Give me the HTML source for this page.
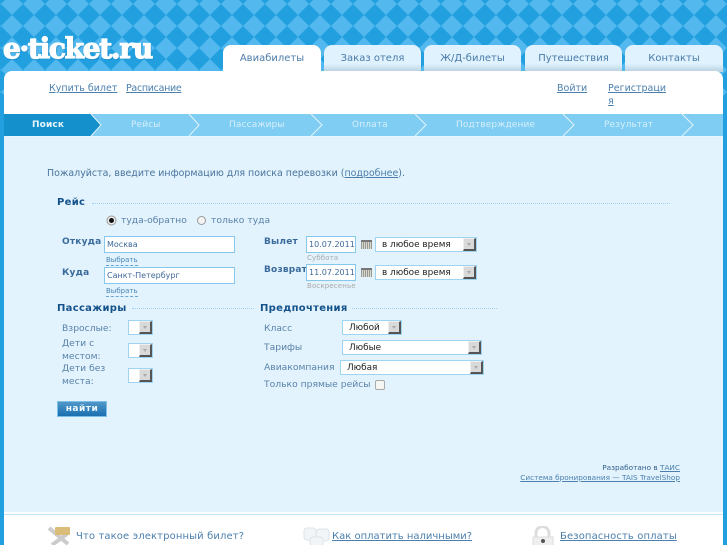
<!DOCTYPE html>
<html><head><meta charset="utf-8">
<style>
html,body{margin:0;padding:0}
body{width:727px;height:545px;overflow:hidden;position:relative;background:#219fdf;font-family:"DejaVu Sans","Liberation Sans",sans-serif;font-size:11px;color:#4b77a3}
.a{position:absolute;white-space:nowrap}
a{color:#4b7fae;text-decoration:underline}
#bg{position:absolute;left:0;top:0}
.logo{left:3px;top:32px;font-family:"DejaVu Serif","Liberation Serif",serif;font-weight:bold;font-size:28px;color:#fff;letter-spacing:-1.3px;-webkit-text-stroke:1.2px #fff;text-shadow:1px 1px 1px #1a7fb8}
.tab{position:absolute;top:45px;height:27px;background:linear-gradient(#dff2fe 0,#dff2fe 70%,#b9d0de 100%);border-radius:8px 8px 0 0;text-align:center;font-size:10px;line-height:27px;color:#4a7ba8}
.tab.on{background:#fff}
#main{position:absolute;left:4px;top:71px;width:719px;height:474px;background:#fff;border-radius:8px 8px 0 0}
#steps{position:absolute;left:4px;top:114px;width:719px;height:22px;background:#7fcdf2;overflow:hidden}
#form{position:absolute;left:4px;top:136px;width:719px;height:375px;background:#e2f3fd;border-top:1px solid #e8f6fe}
#foot{position:absolute;left:4px;top:514px;width:719px;height:31px;background:#fff;border-top:1px solid #bfe5f9;box-sizing:border-box}
.st{position:absolute;top:118px;color:#d6effb;font-size:9px;letter-spacing:.13px;line-height:14px}
h4{margin:0;position:absolute;font-size:10px;color:#14528a;letter-spacing:.3px;font-weight:bold;white-space:nowrap;line-height:14px}
.dot{position:absolute;height:0;border-top:1px dotted #9ed3ef}
.lb{position:absolute;font-weight:bold;font-size:9px;color:#3a6a9c;letter-spacing:.2px;white-space:nowrap;line-height:13px}
.l{position:absolute;font-size:9.2px;color:#5a82aa;line-height:13px;white-space:nowrap}
.in{position:absolute;box-sizing:border-box;height:17px;background:#fff;border:1px solid #85c8ee;font-size:8px;line-height:16px;color:#3f6a9a;padding-left:2px;white-space:nowrap}
.sel{position:absolute;box-sizing:border-box;height:15px;background:#fff;border:1px solid #9ed3f2;font-size:8.9px;line-height:15px;color:#222;white-space:nowrap;padding-left:6px}
.sel i{position:absolute;right:0;top:0;width:13px;height:13px;background:#d9d9d9;border-top:1px solid #eee;border-left:1px solid #eee;border-right:2px solid #555;border-bottom:2px solid #555;box-sizing:border-box}
.sel i:after{content:"";position:absolute;left:3px;top:4px;border:2.500px solid transparent;border-top:3px solid #aaa}
.pick{position:absolute;font-size:7px;color:#4b86b8;border-bottom:1px dashed #6aa5d2;line-height:9px}
.sm{position:absolute;font-size:7px;color:#a9a9a9;letter-spacing:.15px;line-height:9px;white-space:nowrap}
.cal{position:absolute;width:11px;height:7px;background:repeating-linear-gradient(90deg,#999 0 1px,#d8d8c8 1px 2px);border-top:2px solid #777}
.fl{font-size:10px;letter-spacing:.12px;line-height:14px}
.tl{font-size:9.500px;line-height:13px}
</style></head><body>
<svg id="bg" width="727" height="100"><defs><pattern id="p" width="22" height="22" patternUnits="userSpaceOnUse" x="1" y="-7"><polygon points="11,0 22,11 11,22 0,11" fill="#52b8ee"/></pattern></defs><rect width="727" height="100" fill="url(#p)"/></svg>
<div class="a logo">e·ticket.ru</div>
<div class="tab on" style="left:223px;width:98px">Авиабилеты</div>
<div class="tab" style="left:324px;width:97px">Заказ отеля</div>
<div class="tab" style="left:424px;width:97px">Ж/Д-билеты</div>
<div class="tab" style="left:525px;width:97px">Путешествия</div>
<div class="tab" style="left:625px;width:98px">Контакты</div>
<div id="main"></div>
<a class="a tl" style="left:49px;top:82px">Купить билет</a>
<a class="a tl" style="left:126px;top:82px;letter-spacing:-.3px">Расписание</a>
<a class="a tl" style="left:557px;top:82px">Войти</a>
<a class="a tl" style="left:608px;top:82px;line-height:13px">Регистраци<br>я</a>
<div id="steps"></div>
<svg class="a" style="left:0;top:114px" width="727" height="23">
<polygon points="4,0 91,0 101,11 91,22 4,22" fill="#1490cd"/>
<g fill="none" stroke="#e4f4fc" stroke-width="1"><polyline points="91,0 101,11 91,22"/><polyline points="189,0 199,11 189,22"/><polyline points="311,0 322,11 311,22"/><polyline points="415,0 426,11 415,22"/><polyline points="563,0 574,11 563,22"/><polyline points="682,0 693,11 682,22"/></g>
</svg>
<div class="a st" style="left:32px;color:#e9f6fc;font-weight:bold">Поиск</div>
<div class="a st" style="left:131px">Рейсы</div>
<div class="a st" style="left:229px">Пассажиры</div>
<div class="a st" style="left:352px">Оплата</div>
<div class="a st" style="left:456px">Подтверждение</div>
<div class="a st" style="left:604px">Результат</div>
<div id="form"></div>
<div class="a" style="left:47px;top:167px;font-size:9.450px;line-height:13px;color:#4a739c">Пожалуйста, введите информацию для поиска перевозки (<a>подробнее</a>).</div>
<h4 style="left:57px;top:196px">Рейс</h4><div class="dot" style="left:92px;top:203px;width:578px"></div>
<svg class="a" style="left:106px;top:215px" width="12" height="12"><circle cx="5.500" cy="5.500" r="4.500" fill="#eee" stroke="#999"/><circle cx="5.500" cy="5.500" r="2.500" fill="#111"/></svg>
<div class="l" style="left:121px;top:214px">туда-обратно</div>
<svg class="a" style="left:197px;top:215px" width="12" height="12"><circle cx="4.500" cy="5.500" r="4" fill="#f4f4f4" stroke="#999"/></svg>
<div class="l" style="left:211px;top:214px">только туда</div>
<div class="lb" style="left:62px;top:236px">Откуда</div>
<div class="in" style="left:104px;top:236px;width:131px">Москва</div>
<div class="pick" style="left:106px;top:256px">Выбрать</div>
<div class="lb" style="left:62px;top:267px">Куда</div>
<div class="in" style="left:104px;top:267px;width:131px">Санкт-Петербург</div>
<div class="pick" style="left:106px;top:287px">Выбрать</div>
<div class="lb" style="left:264px;top:236px">Вылет</div>
<div class="in" style="left:306px;top:236px;width:50px">10.07.2011</div>
<div class="sm" style="left:307px;top:254px">Суббота</div>
<div class="cal" style="left:361px;top:240px"></div>
<div class="sel" style="left:375px;top:237px;width:102px">в любое время<i></i></div>
<div class="lb" style="left:264px;top:264px">Возврат</div>
<div class="in" style="left:306px;top:264px;width:50px">11.07.2011</div>
<div class="sm" style="left:307px;top:282px">Воскресенье</div>
<div class="cal" style="left:361px;top:268px"></div>
<div class="sel" style="left:375px;top:265px;width:102px">в любое время<i></i></div>
<h4 style="left:57px;top:302px">Пассажиры</h4><div class="dot" style="left:132px;top:308px;width:122px"></div>
<h4 style="left:260px;top:302px">Предпочтения</h4><div class="dot" style="left:352px;top:308px;width:145px"></div>
<div class="l" style="left:62px;top:322px">Взрослые:</div>
<div class="sel" style="left:128px;top:320px;width:25px">&nbsp;<i></i></div>
<div class="l" style="left:62px;top:338px;line-height:12.500px">Дети с<br>местом:</div>
<div class="sel" style="left:128px;top:343px;width:25px">&nbsp;<i></i></div>
<div class="l" style="left:62px;top:363px;line-height:12.500px">Дети без<br>места:</div>
<div class="sel" style="left:128px;top:368px;width:25px">&nbsp;<i></i></div>
<div class="a" style="left:57px;top:401px;width:50px;height:16px;box-sizing:border-box;background:linear-gradient(#4f97c9,#1b6faf);border:1px solid #7cc0ea;color:#eef8ff;font-weight:bold;font-size:9px;letter-spacing:.5px;text-align:center;line-height:14px">найти</div>
<div class="l" style="left:264px;top:322px">Класс</div>
<div class="sel" style="left:342px;top:320px;width:60px">Любой<i></i></div>
<div class="l" style="left:264px;top:341px">Тарифы</div>
<div class="sel" style="left:342px;top:340px;width:140px">Любые<i></i></div>
<div class="l" style="left:264px;top:361px">Авиакомпания</div>
<div class="sel" style="left:340px;top:360px;width:144px">Любая<i></i></div>
<div class="l" style="left:264px;top:378px">Только прямые рейсы</div>
<div class="a" style="left:375px;top:380px;width:8px;height:8px;background:#f6f6f2;border:1px solid #aaa;border-radius:2px"></div>
<div class="a" style="right:47px;top:463px;font-size:7.300px;line-height:10px;color:#35608f">Разработано в <a>ТАИС</a></div>
<a class="a" style="right:47px;top:473px;font-size:7.300px;line-height:10px">Система бронирования — TAIS TravelShop</a>
<div id="foot"></div>
<svg class="a" style="left:46px;top:526px" width="26" height="19"><path d="M3 2L22 18M21 8L6 19" stroke="#ccc" stroke-width="4"/><rect x="9" y="1" width="15" height="8" rx="1" fill="#d9bd78"/></svg>
<div class="a fl" style="left:76px;top:530px;color:#4b7fae">Что такое электронный билет?</div>
<svg class="a" style="left:303px;top:527px" width="28" height="18"><g fill="#f2f5f7" stroke="#dde3e8"><rect x="1" y="1" width="12" height="12" rx="3"/><rect x="13" y="2" width="13" height="12" rx="3"/><rect x="7" y="10" width="13" height="9" rx="3"/></g></svg>
<a class="a fl" style="left:332px;top:530px;letter-spacing:0">Как оплатить наличными?</a>
<svg class="a" style="left:530px;top:526px" width="26" height="19"><path d="M6 11V7a6.500 6.500 0 0 1 13 0v4" fill="none" stroke="#ddd" stroke-width="3"/><rect x="3" y="11" width="20" height="9" fill="#efefef" stroke="#ddd"/><circle cx="13" cy="15" r="2" fill="#555"/></svg>
<a class="a fl" style="left:560px;top:530px">Безопасность оплаты</a>
</body></html>
